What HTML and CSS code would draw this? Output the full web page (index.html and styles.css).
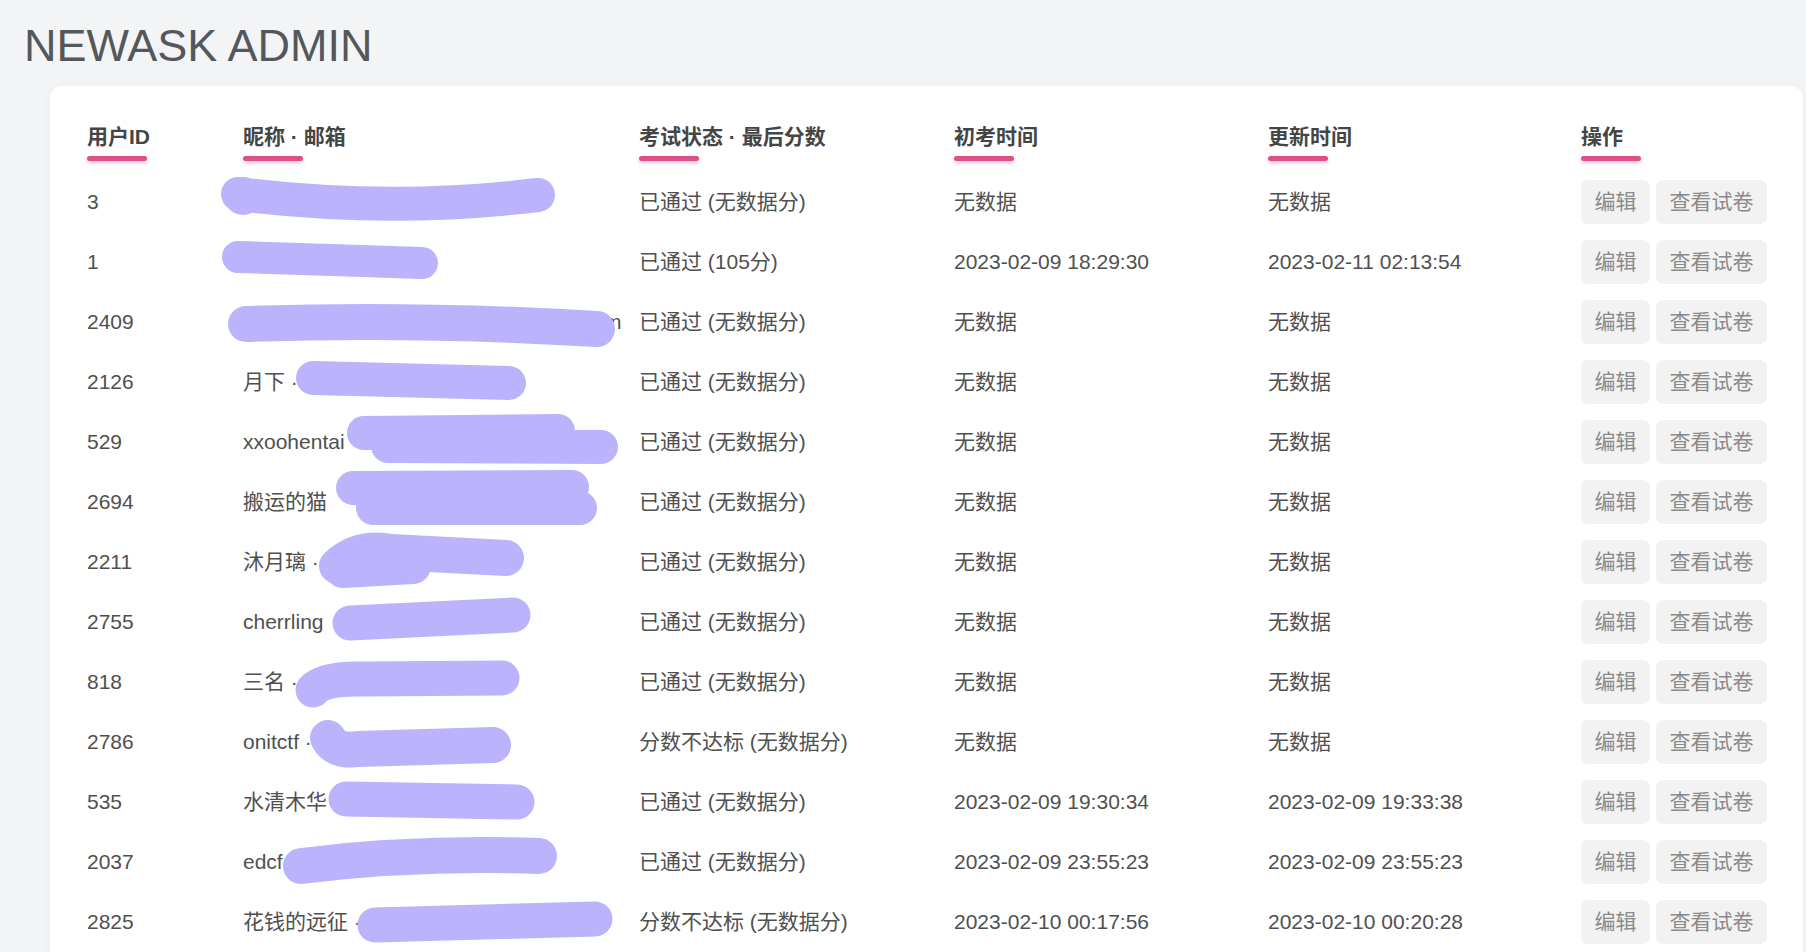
FILE: index.html
```html
<!DOCTYPE html>
<html lang="zh-CN">
    <head>
        <meta charset="utf-8">
        <title>NEWASK ADMIN</title>
        <link rel="stylesheet" href="styles.css">
    </head>

    <body>
        <div class="Page">
            <h1 class="Title">NEWASK ADMIN</h1>

            <div class="Card">
                <table class="UserTable">
                    <colgroup>
                        <col class="ColId">
                        <col class="ColName">
                        <col class="ColStatus">
                        <col class="ColFirst">
                        <col class="ColUpdate">
                        <col>
                    </colgroup>
                    <thead>
                        <tr>
                            <th><div class="HeadText">用户ID</div><div class="Bar"></div></th>
                            <th><div class="HeadText">昵称 · 邮箱</div><div class="Bar"></div></th>
                            <th><div class="HeadText">考试状态 · 最后分数</div><div class="Bar"></div></th>
                            <th><div class="HeadText">初考时间</div><div class="Bar"></div></th>
                            <th><div class="HeadText">更新时间</div><div class="Bar"></div></th>
                            <th><div class="HeadText">操作</div><div class="Bar"></div></th>
                        </tr>
                    </thead>
                    <tbody>
                        <tr>
                            <td>3</td>
                            <td><div class="Name"><svg class="Mask" viewBox="0 0 440 60"><path d="M25 22 Q177 41 325 23" stroke-width="34"/><circle cx="30" cy="24" r="19"/></svg></div></td>
                            <td>已通过 (无数据分)</td>
                            <td>无数据</td>
                            <td>无数据</td>
                            <td><button class="Btn">编辑</button><button class="Btn">查看试卷</button></td>
                        </tr>
                        <tr>
                            <td>1</td>
                            <td><div class="Name"><svg class="Mask" viewBox="0 0 440 60"><path d="M25 25 L209 31" stroke-width="32"/></svg></div></td>
                            <td>已通过 (105分)</td>
                            <td>2023-02-09 18:29:30</td>
                            <td>2023-02-11 02:13:54</td>
                            <td><button class="Btn">编辑</button><button class="Btn">查看试卷</button></td>
                        </tr>
                        <tr>
                            <td>2409</td>
                            <td><div class="Name"><span class="Tail">m</span><svg class="Mask" viewBox="0 0 440 60"><path d="M33 32 Q200 26 384 37" stroke-width="36"/></svg></div></td>
                            <td>已通过 (无数据分)</td>
                            <td>无数据</td>
                            <td>无数据</td>
                            <td><button class="Btn">编辑</button><button class="Btn">查看试卷</button></td>
                        </tr>
                        <tr>
                            <td>2126</td>
                            <td><div class="Name">月下 ·<svg class="Mask" viewBox="0 0 440 60"><path d="M100 26 L296 31" stroke-width="34"/></svg></div></td>
                            <td>已通过 (无数据分)</td>
                            <td>无数据</td>
                            <td>无数据</td>
                            <td><button class="Btn">编辑</button><button class="Btn">查看试卷</button></td>
                        </tr>
                        <tr>
                            <td>529</td>
                            <td><div class="Name">xxoohentai<svg class="Mask" viewBox="0 0 440 60"><path d="M151 21 L345 19 M175 34 L388 35" stroke-width="34"/></svg></div></td>
                            <td>已通过 (无数据分)</td>
                            <td>无数据</td>
                            <td>无数据</td>
                            <td><button class="Btn">编辑</button><button class="Btn">查看试卷</button></td>
                        </tr>
                        <tr>
                            <td>2694</td>
                            <td><div class="Name">搬运的猫<svg class="Mask" viewBox="0 0 440 60"><path d="M140 16 L359 15 M160 36 L367 36" stroke-width="34"/></svg></div></td>
                            <td>已通过 (无数据分)</td>
                            <td>无数据</td>
                            <td>无数据</td>
                            <td><button class="Btn">编辑</button><button class="Btn">查看试卷</button></td>
                        </tr>
                        <tr>
                            <td>2211</td>
                            <td><div class="Name">沐月璃 ·<svg class="Mask" viewBox="0 0 440 60"><path d="M124 34 Q146 14 178 20 L293 26" stroke-width="36"/><path d="M130 38 L200 34" stroke-width="36"/></svg></div></td>
                            <td>已通过 (无数据分)</td>
                            <td>无数据</td>
                            <td>无数据</td>
                            <td><button class="Btn">编辑</button><button class="Btn">查看试卷</button></td>
                        </tr>
                        <tr>
                            <td>2755</td>
                            <td><div class="Name">cherrling<svg class="Mask" viewBox="0 0 440 60"><path d="M137 31 L300 23" stroke-width="35"/></svg></div></td>
                            <td>已通过 (无数据分)</td>
                            <td>无数据</td>
                            <td>无数据</td>
                            <td><button class="Btn">编辑</button><button class="Btn">查看试卷</button></td>
                        </tr>
                        <tr>
                            <td>818</td>
                            <td><div class="Name">三名 ·<svg class="Mask" viewBox="0 0 440 60"><path d="M100 38 Q110 26 150 27 L289 26" stroke-width="35"/></svg></div></td>
                            <td>已通过 (无数据分)</td>
                            <td>无数据</td>
                            <td>无数据</td>
                            <td><button class="Btn">编辑</button><button class="Btn">查看试卷</button></td>
                        </tr>
                        <tr>
                            <td>2786</td>
                            <td><div class="Name">onitctf ·<svg class="Mask" viewBox="0 0 440 60"><path d="M115 26 Q122 40 145 37 L280 33" stroke-width="36"/></svg></div></td>
                            <td>分数不达标 (无数据分)</td>
                            <td>无数据</td>
                            <td>无数据</td>
                            <td><button class="Btn">编辑</button><button class="Btn">查看试卷</button></td>
                        </tr>
                        <tr>
                            <td>535</td>
                            <td><div class="Name">水清木华<svg class="Mask" viewBox="0 0 440 60"><path d="M133 27 L304 30" stroke-width="35"/></svg></div></td>
                            <td>已通过 (无数据分)</td>
                            <td>2023-02-09 19:30:34</td>
                            <td>2023-02-09 19:33:38</td>
                            <td><button class="Btn">编辑</button><button class="Btn">查看试卷</button></td>
                        </tr>
                        <tr>
                            <td>2037</td>
                            <td><div class="Name">edcf<svg class="Mask" viewBox="0 0 440 60"><path d="M88 34 Q200 20 326 24" stroke-width="36"/></svg></div></td>
                            <td>已通过 (无数据分)</td>
                            <td>2023-02-09 23:55:23</td>
                            <td>2023-02-09 23:55:23</td>
                            <td><button class="Btn">编辑</button><button class="Btn">查看试卷</button></td>
                        </tr>
                        <tr>
                            <td>2825</td>
                            <td><div class="Name">花钱的远征 ·<svg class="Mask" viewBox="0 0 440 60"><path d="M162 33 L382 27" stroke-width="35"/></svg></div></td>
                            <td>分数不达标 (无数据分)</td>
                            <td>2023-02-10 00:17:56</td>
                            <td>2023-02-10 00:20:28</td>
                            <td><button class="Btn">编辑</button><button class="Btn">查看试卷</button></td>
                        </tr>
                    </tbody>
                </table>
            </div>
        </div>
    </body>
</html>
```

FILE: styles.css
```css
html, body{
    margin: 0;
    height: 100%;
    overflow: hidden;
}

body{
    background: #f3f4f6;
    font-family: "Liberation Sans", "Noto Sans CJK SC", sans-serif;
    color: #505050;
}

.Page{
    padding: 21px 3px 0 24px;
}

.Title{
    margin: 0 0 15px 0;
    font-size: 45px;
    line-height: 50px;
    font-weight: normal;
    color: #54575c;
}

.Card{
    margin-left: 26px;
    padding: 39px 0 40px 37px;
    background: white;
    border-radius: 12px;
    box-shadow: 0 0 10px rgba(0, 0, 0, 0.04);
}

.UserTable{
    border-collapse: collapse;
    table-layout: fixed;
    width: 100%;
    font-size: 21px;
    line-height: 24px;
}

.ColId{ width: 156px; }
.ColName{ width: 396px; }
.ColStatus{ width: 315px; }
.ColFirst{ width: 314px; }
.ColUpdate{ width: 313px; }

.UserTable th{
    text-align: left;
    padding: 0 0 11px 0;
    vertical-align: top;
}

.HeadText{
    font-weight: bold;
    color: #454545;
    white-space: nowrap;
}

.Bar{
    width: 60px;
    height: 5px;
    margin-top: 7px;
    border-radius: 3px;
    background: #e04e8a;
    box-shadow: 0 2px 4px rgba(224, 78, 138, 0.35);
}

.UserTable td{
    height: 60px;
    padding: 0;
    vertical-align: middle;
    white-space: nowrap;
}

.Name{
    position: relative;
    height: 24px;
}

.Tail{
    padding-left: 361px;
}

.Mask{
    position: absolute;
    left: -30px;
    top: -18px;
    width: 440px;
    height: 60px;
    overflow: visible;
}

.Mask path{
    fill: none;
    stroke: #bbb4fc;
    stroke-linecap: round;
    stroke-linejoin: round;
}

.Mask circle{
    fill: #bbb4fc;
}

.Btn{
    height: 44px;
    padding: 0 13.5px;
    margin-right: 6px;
    border: none;
    border-radius: 7px;
    background: #f2f2f2;
    color: #8a8a8a;
    font-family: "Liberation Sans", "Noto Sans CJK SC", sans-serif;
    font-size: 21px;
    line-height: 44px;
    vertical-align: middle;
}
```
